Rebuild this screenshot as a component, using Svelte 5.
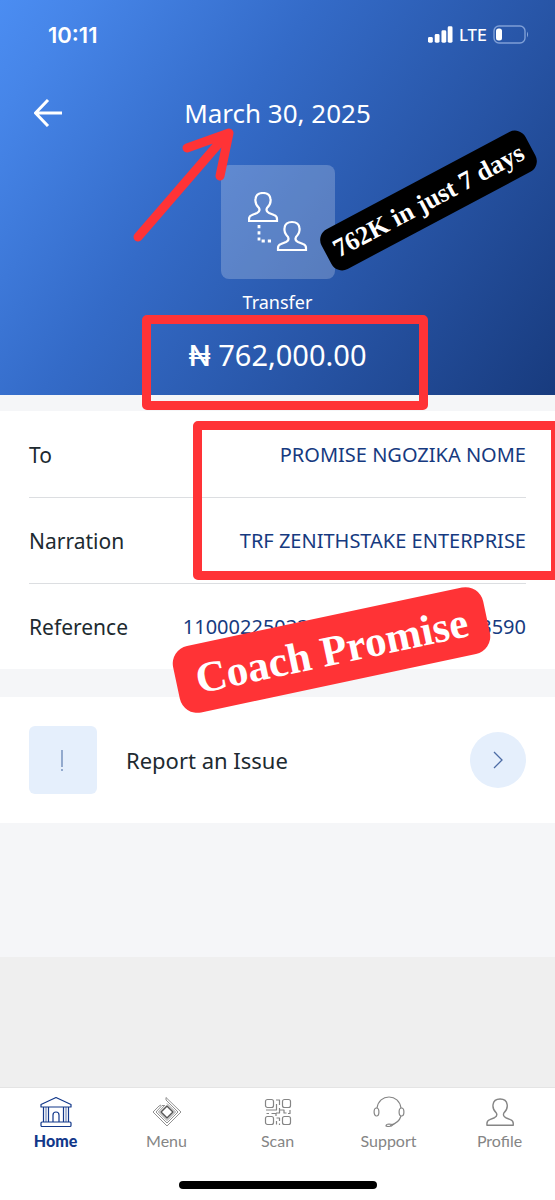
<script lang="ts">
	const details = [
		{ label: 'To', value: 'PROMISE NGOZIKA NOME' },
		{ label: 'Narration', value: 'TRF ZENITHSTAKE ENTERPRISE' },
		{ label: 'Reference', value: '110002250330101145000000283590' }
	];

	const tabs = ['Home', 'Menu', 'Scan', 'Support', 'Profile'];
	let active = $state('Home');
</script>

{#snippet person()}
	<path d="M11 16C8 13 7 10 7.500 7C8 3 11 1 15 1s7 2 7.500 6C23 10 22 13 19 16c-1 2 0 4 2 5l5 2q3 1 3 4v2H1v-2q0-3 3-4l5-2c2-1 3-3 2-5z" />
{/snippet}

<div class="page">
	<header class="hero">
		<div class="status">
			<span class="time">10:11</span>
			<div class="signal">
				<svg width="25" height="18" viewBox="0 0 26 18" fill="#fff" aria-hidden="true">
					<rect x="0" y="11" width="5" height="6" rx="1.500" />
					<rect x="7" y="8" width="5" height="9" rx="1.500" />
					<rect x="14" y="4" width="5" height="13" rx="1.500" />
					<rect x="20.500" y="0" width="5" height="17" rx="1.500" />
				</svg>
				<span class="network">LTE</span>
				<svg width="36" height="20" viewBox="0 0 36 20" aria-hidden="true">
					<rect x="1" y="1" width="31" height="17" rx="5" fill="none" stroke="#7f9fd6" stroke-width="1.400" />
					<rect x="3" y="3.500" width="6" height="12" rx="2.500" fill="#fff" />
					<path d="M34 6.500q2 3 0 6z" fill="#8aa9dc" />
				</svg>
			</div>
		</div>

		<div class="nav">
			<button class="back" aria-label="Back">
				<svg width="28" height="28" viewBox="0 0 28 28" fill="none" stroke="#fff" stroke-width="3" stroke-linejoin="round">
					<path d="M28 14H2M14 1L1.500 14L14 27" />
				</svg>
			</button>
			<h1>March 30, 2025</h1>
		</div>

		<div class="tile">
			<svg width="60" height="60" viewBox="0 0 60 60" fill="none" stroke="#fff" stroke-width="2.200" aria-hidden="true">
				{@render person()}
				<g transform="translate(29 29)">{@render person()}</g>
				<path d="M11 33V49H26" stroke-width="2.800" stroke-dasharray="3.200 3" />
			</svg>
		</div>
		<p class="kind">Transfer</p>
		<p class="amount"><span class="naira">₦</span> 762,000.00</p>

		<svg class="arrow" width="110" height="124" viewBox="0 0 110 124" fill="none" stroke="#ff3336" stroke-width="9" stroke-linecap="round" stroke-linejoin="round" aria-hidden="true">
			<path d="M8 115L97 12M57 26L99 11L90 54" />
		</svg>
		<div class="frame frame-amount"></div>
		<div class="sticker sticker-black">762K in just 7 days</div>
	</header>

	<main>
		<section class="details">
			<dl>
				{#each details as row}
					<div class="row">
						<dt>{row.label}</dt>
						<dd>{row.value}</dd>
					</div>
				{/each}
			</dl>
			<div class="frame frame-details"></div>
			<div class="sticker sticker-red">Coach Promise</div>
		</section>

		<button class="report">
			<span class="report-icon">
				<svg width="8" height="24" viewBox="0 0 8 24" stroke="#6784b5" stroke-width="1.300" aria-hidden="true">
					<path d="M3 2V19M3 21V23" />
				</svg>
			</span>
			<span class="report-text">Report an Issue</span>
			<span class="go">
				<svg width="12" height="20" viewBox="0 0 12 20" fill="none" stroke="#4c6ca5" stroke-width="1.300" aria-hidden="true">
					<path d="M2 2L10 10L2 18" />
				</svg>
			</span>
		</button>
	</main>

	<div class="filler"></div>

	<footer>
		<nav class="tabs">
			{#each tabs as tab}
				<button class="tab" class:active={active === tab} onclick={() => (active = tab)}>
					<svg width="32" height="32" viewBox="0 0 32 32" fill="none" stroke="currentColor" stroke-width="1.200" stroke-linejoin="round" aria-hidden="true">
						{#if tab === 'Home'}
							<path d="M1 8.500L16 1.500L31 8.500V11H1zM3.500 11V26M8.500 11V26M23.500 11V26M28.500 11V26M13 26V19q0-3 3-3t3 3V26" />
							<path d="M6 11V26M26 11V26" stroke-width=".7" />
							<rect x="1" y="26" width="30" height="4.500" rx="1" />
						{:else if tab === 'Menu'}
							<path d="M15 1.500V4L27 16L16 27L5 16L11 9.500H13" stroke-width=".9" />
							<path d="M15 1.500L30 16L16 30L2 16L8 10L10 9" stroke-width=".9" />
							<path d="M16 7.500L24.500 16L16 24.500L7.500 16L14 9" stroke-width=".9" />
							<path d="M16 10L22 16L16 22L10 16z" stroke="#555" stroke-width="1.500" />
						{:else if tab === 'Scan'}
							<rect x="3.500" y="3.500" width="8" height="8" rx="2" />
							<rect x="20.500" y="3.500" width="8" height="8" rx="2" />
							<rect x="3.500" y="20.500" width="8" height="8" rx="2" />
							<rect x="20.500" y="20.500" width="8" height="8" rx="2" />
							<path d="M14 4H17.500V9M14.500 8V14H4M4.500 17.500H7M9.500 17.500H14V20M17.500 12V17H14M17.500 14H22V17H24.500M28 14V17.500H26M14.500 22H17.500V25M14.500 25V28.500M17.500 27.500V29" />
						{:else if tab === 'Support'}
							<path d="M4 12C5 5 10 1 16 1s11 4 12 11M28 20q-2 7-11 9.500" />
							<ellipse cx="3.500" cy="16" rx="2.400" ry="4" />
							<ellipse cx="28.500" cy="16" rx="2.400" ry="4" />
							<path d="M13 30q0-2 3-2l4 .5q-1 2-4 2t-3-.5z" />
						{:else}
							<g transform="translate(2 2) scale(.94)" stroke-width="1.500">{@render person()}</g>
						{/if}
					</svg>
					<span>{tab}</span>
				</button>
			{/each}
		</nav>
		<div class="home-indicator"></div>
	</footer>
</div>

<style>
	:global(body) {
		margin: 0;
	}

	.page {
		min-height: 100vh;
		display: flex;
		flex-direction: column;
		overflow-x: hidden;
		background: #f5f6f8;
		color: #202a30;
		font-family: 'Noto Sans', sans-serif;
	}

	button {
		border: 0;
		padding: 0;
		background: none;
		color: inherit;
		font-family: inherit;
		cursor: pointer;
	}

	svg {
		display: block;
	}

	.hero {
		position: relative;
		z-index: 1;
		display: flex;
		flex-direction: column;
		align-items: center;
		padding-bottom: 7px;
		background: linear-gradient(125deg, #4b8df2 0%, #4685e8 10%, #346bc8 38%, #2754a5 68%, #183b7e 100%);
		color: #fff;
	}

	.status {
		align-self: stretch;
		height: 70px;
		display: flex;
		align-items: center;
		justify-content: space-between;
		padding: 0 26px 0 48px;
	}

	.time {
		font-family: Inter, sans-serif;
		font-size: 22px;
		font-weight: 600;
	}

	.signal {
		display: flex;
		align-items: center;
		gap: 6px;
	}

	.network {
		font-family: Inter, sans-serif;
		font-size: 16px;
		font-weight: 500;
		line-height: 20px;
	}

	.nav {
		align-self: stretch;
		display: grid;
		grid-template-columns: 62px 1fr 62px;
		align-items: center;
		height: 86px;
		margin-bottom: 9px;
	}

	.back {
		justify-self: end;
		padding: 4px 0;
	}

	h1 {
		margin: 0;
		font-size: 26px;
		font-weight: 400;
		line-height: 34px;
		text-align: center;
	}

	.tile {
		width: 114px;
		height: 114px;
		display: flex;
		align-items: center;
		justify-content: center;
		border-radius: 8px;
		background: rgba(255, 255, 255, 0.22);
	}

	.kind,
	.amount {
		margin: 0;
	}

	.kind {
		font-size: 18px;
		line-height: 46px;
	}

	.amount {
		font-size: 29px;
		line-height: 60px;
		padding-bottom: 2px;
	}

	.naira {
		font-family: Inter, sans-serif;
		font-weight: 500;
	}

	.arrow {
		position: absolute;
		left: calc(50% - 148px);
		top: 122px;
	}

	.frame {
		position: absolute;
		box-sizing: border-box;
		border: 9px solid #ff3336;
		border-radius: 5px;
		pointer-events: none;
	}

	.frame-amount {
		left: calc(50% - 136px);
		bottom: -15px;
		width: 286px;
		height: 95px;
	}

	.sticker {
		position: absolute;
		display: flex;
		align-items: center;
		justify-content: center;
		color: #fff;
		font-family: 'Liberation Serif', serif;
		font-weight: 700;
		white-space: nowrap;
	}

	.sticker-black {
		left: calc(50% + 35px);
		top: 178px;
		width: 231px;
		height: 45px;
		border-radius: 12px;
		background: #000;
		font-size: 26px;
		transform: rotate(-28deg);
	}

	.sticker-red {
		right: 65px;
		bottom: -15px;
		width: 317px;
		height: 68px;
		border-radius: 18px;
		background: #ff3336;
		font-size: 43px;
		transform: rotate(-12deg);
	}

	main {
		display: flex;
		flex-direction: column;
		gap: 28px;
		padding: 16px 0 134px;
	}

	.details {
		position: relative;
		padding: 1px 29px 0;
		background: #fff;
	}

	dl {
		margin: 0;
	}

	.row {
		display: flex;
		align-items: center;
		justify-content: space-between;
		height: 85px;
		border-bottom: 1px solid #dcdee1;
	}

	.row:last-child {
		border-bottom: 0;
	}

	dt {
		font-size: 21px;
	}

	dd {
		margin: 0;
		color: #163a80;
		font-size: 20px;
	}

	.frame-details {
		left: 193px;
		right: -5px;
		top: 10px;
		height: 159px;
	}

	.report {
		display: flex;
		align-items: center;
		padding: 29px;
		background: #fff;
		text-align: left;
	}

	.report-icon {
		width: 68px;
		height: 68px;
		display: flex;
		align-items: center;
		justify-content: center;
		border-radius: 6px;
		background: #e5effc;
	}

	.report-text {
		flex: 1;
		margin-left: 29px;
		font-size: 22px;
	}

	.go {
		width: 56px;
		height: 56px;
		display: flex;
		align-items: center;
		justify-content: center;
		border-radius: 50%;
		background: #e5effc;
	}

	.filler {
		flex: 1;
		background: #efefef;
	}

	footer {
		display: flex;
		flex-direction: column;
		align-items: center;
		gap: 30px;
		padding: 8px 0 11px;
		border-top: 1px solid #e4e4e4;
		background: #fff;
	}

	.tabs {
		align-self: stretch;
		display: grid;
		grid-template-columns: repeat(5, 1fr);
	}

	.tab {
		display: flex;
		flex-direction: column;
		align-items: center;
		gap: 3px;
		color: #858585;
		font-family: Lato, sans-serif;
		font-size: 16px;
		line-height: 20px;
	}

	.tab.active {
		color: #12388a;
		font-weight: 900;
	}

	.home-indicator {
		width: 198px;
		height: 8px;
		border-radius: 4px;
		background: #000;
	}
</style>
